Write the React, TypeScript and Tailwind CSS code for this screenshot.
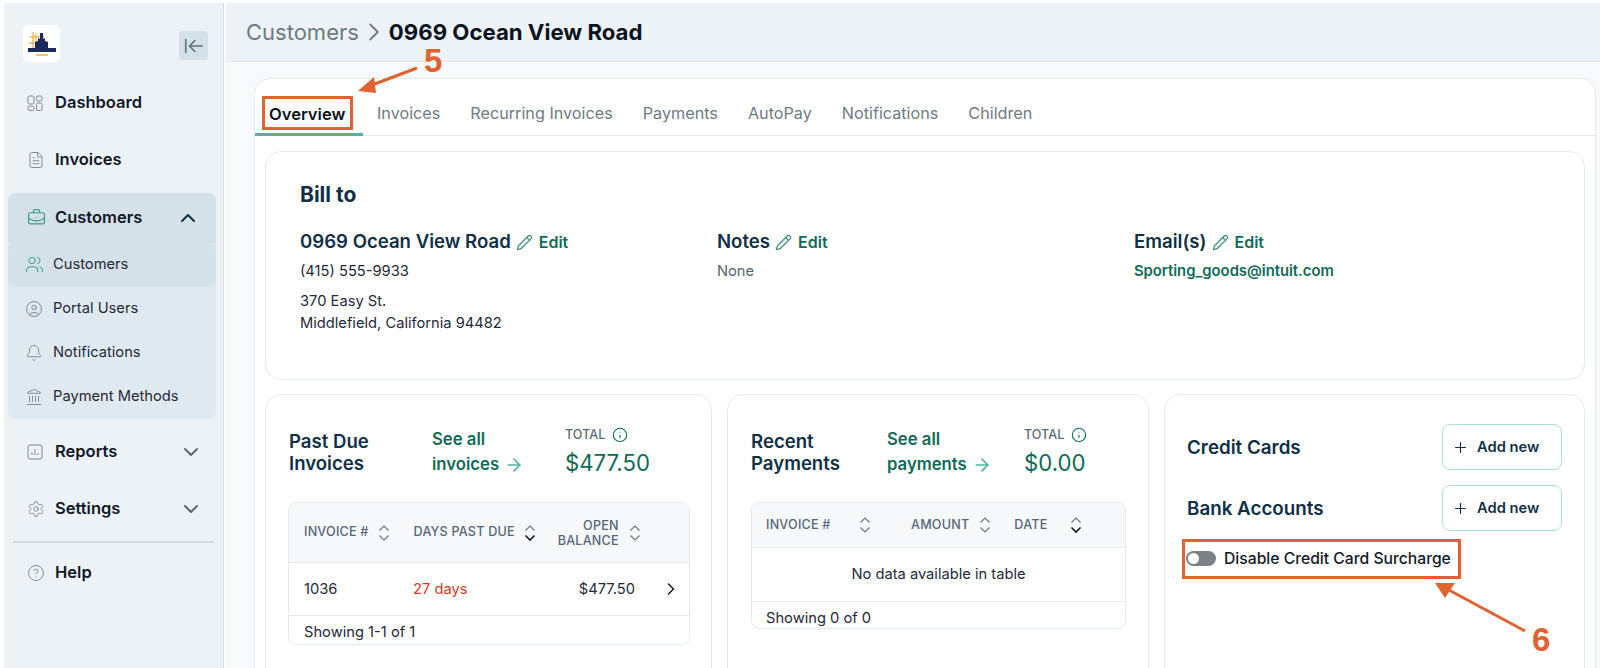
import type { ReactNode } from "react"
import {
  ArrowLeftToLine,
  ArrowRight,
  Bell,
  BriefcaseBusiness,
  ChevronDown,
  ChevronRight,
  ChevronUp,
  CircleHelp,
  CircleUser,
  FileText,
  Info,
  Landmark,
  Pencil,
  Plus,
  Settings,
  Users,
} from "lucide-react"

function Logo() {
  return (
    <div className="w-[37px] h-[37px] rounded-md bg-white ml-[19px] flex items-center justify-center">
      <svg width="32" height="28" viewBox="0 0 32 28">
        <path d="M7 2v17M4 7h14M3 13h10M10 4v12" stroke="#f3b35c" strokeWidth="1.4" fill="none" />
        <path d="M9 18v-6l3-1v-3l2 1V3h3v6l2-1v3l3 1v6z" fill="#1a2a5e" />
        <rect x="2" y="18" width="28" height="4" fill="#1a2a5e" />
        <rect x="10" y="24" width="12" height="2" fill="#f3c26e" />
      </svg>
    </div>
  )
}

function DashboardIcon() {
  return (
    <svg width="16" height="16" viewBox="0 0 16 16" fill="none" stroke="#7f878e" strokeWidth="1">
      <rect x="1" y="1" width="6" height="8" rx="1.5" />
      <rect x="9.5" y="1" width="5.5" height="5" rx="1.5" />
      <rect x="1" y="11" width="6" height="4.5" rx="1.5" />
      <rect x="9.5" y="8" width="5.5" height="7.5" rx="1.5" />
    </svg>
  )
}

function ReportIcon() {
  return (
    <svg width="16" height="16" viewBox="0 0 16 16" fill="none" stroke="#7f878e" strokeWidth="1">
      <rect x="1" y="1" width="14" height="14" rx="2" />
      <path d="M5 11V8M8 11V5M11 11V9" />
    </svg>
  )
}

function NavItem({ icon, label, chevron }: { icon: ReactNode; label: string; chevron?: boolean }) {
  return (
    <div className="h-[57px] flex items-center pl-[23px] pr-[20px]">
      <span className="w-[28px] flex">{icon}</span>
      <span className="text-[16.5px] font-semibold text-[#111827]">{label}</span>
      {chevron && <ChevronDown className="ml-auto w-[24px] h-[24px] text-[#5b6b75]" strokeWidth={2} />}
    </div>
  )
}

function SubItem({ icon, label, active }: { icon: ReactNode; label: string; active?: boolean }) {
  return (
    <div className={`h-[44px] flex items-center pl-[17px] pb-[1px] rounded-lg ${active ? "bg-[#d5e1e9]" : ""}`}>
      <span className="w-[28px] flex">{icon}</span>
      <span className="text-[14.7px] text-[#1f2937]">{label}</span>
    </div>
  )
}

function Sidebar() {
  const gray = "w-[18px] h-[18px] text-[#7f878e]"
  return (
    <aside className="w-[220px] shrink-0 bg-[#edf2f7] border-r border-[#d8dde2] flex flex-col">
      <div className="h-[71px] flex items-start justify-between pt-[22px] pr-[15px]">
        <Logo />
        <button className="w-[29px] h-[29px] mt-[6px] rounded bg-[#d5e1e9] flex items-center justify-center">
          <ArrowLeftToLine className="w-[22px] h-[22px] text-[#5f6f7a]" strokeWidth={1.75} />
        </button>
      </div>
      <NavItem icon={<DashboardIcon />} label="Dashboard" />
      <NavItem icon={<FileText className={gray} strokeWidth={1.25} />} label="Invoices" />
      <div className="mx-[4px] mt-[5px] w-[208px] rounded-lg bg-[#e1e9f0]">
        <div className="h-[50px] pb-[1px] rounded-t-lg bg-[#d5e1e9] flex items-center pl-[19px] pr-[16px]">
          <span className="w-[28px] flex">
            <BriefcaseBusiness className="w-[19px] h-[19px] text-[#3f9c86]" strokeWidth={1.5} />
          </span>
          <span className="text-[16.5px] font-semibold text-[#111827]">Customers</span>
          <ChevronUp className="ml-auto w-[24px] h-[24px] text-[#0f3047]" strokeWidth={2} />
        </div>
        <SubItem icon={<Users className="w-[19px] h-[19px] text-[#3f9c86]" strokeWidth={1.25} />} label="Customers" active />
        <SubItem icon={<CircleUser className={gray} strokeWidth={1.25} />} label="Portal Users" />
        <SubItem icon={<Bell className={gray} strokeWidth={1.25} />} label="Notifications" />
        <SubItem icon={<Landmark className={gray} strokeWidth={1.25} />} label="Payment Methods" />
      </div>
      <div className="mt-[4px]">
        <NavItem icon={<ReportIcon />} label="Reports" chevron />
        <NavItem icon={<Settings className={gray} strokeWidth={1.25} />} label="Settings" chevron />
      </div>
      <div className="mx-[9px] mt-[4px] mb-[1px] h-[2px] bg-[#d3d9de]" />
      <NavItem icon={<CircleHelp className={gray} strokeWidth={1.25} />} label="Help" />
    </aside>
  )
}

function BillColumn({ title, children }: { title: string; children: ReactNode }) {
  return (
    <div className="w-[417px] shrink-0">
      <div className="flex items-center h-[24px]">
        <span className="text-[18.6px] font-semibold text-[#0f3047]">{title}</span>
        <Pencil className="w-[17px] h-[17px] ml-[5px] text-[#3f8f78]" strokeWidth={1.75} />
        <span className="ml-[6px] text-[16px] font-semibold text-[#0f6b57]">Edit</span>
      </div>
      {children}
    </div>
  )
}

function Sort({ dark }: { dark?: boolean }) {
  return (
    <svg className="shrink-0" width="14" height="18" viewBox="0 0 14 18" fill="none" strokeWidth="1.2">
      <path d="M2.5 6.5L7 2l4.5 4.5" stroke="#6b7682" />
      <path d="M2.5 11.5L7 16l4.5-4.5" stroke={dark ? "#111827" : "#6b7682"} strokeWidth={dark ? 1.6 : 1.2} />
    </svg>
  )
}

function SummaryHead({ line1, line2, link1, link2, total, linkW, titleW }: { line1: string; line2: string; link1: string; link2: string; total: string; linkW: string; titleW: string }) {
  return (
    <div className="flex items-start pt-[31px] h-[107px]">
      <div className={`${titleW} pt-[4px] text-[18.6px] leading-[22px] font-semibold text-[#0f3047]`}>
        {line1}
        <br />
        {line2}
      </div>
      <div className={`${linkW} pt-[1px] text-[16.7px] leading-[25px] font-semibold text-[#0f6b57]`}>
        {link1}
        <br />
        <span className="inline-flex items-center gap-[5px]">
          {link2}
          <ArrowRight className="w-[20px] h-[20px] text-[#4fb5a0]" strokeWidth={2} />
        </span>
      </div>
      <div>
        <div className="flex items-center h-[18px] gap-[7px] text-[12.6px] font-medium text-[#5b6b75]">
          TOTAL
          <Info className="w-[16px] h-[16px] text-[#0f6b57]" strokeWidth={1.6} />
        </div>
        <div className="mt-[4px] text-[22.2px] leading-[30px] text-[#0f6b57]">{total}</div>
      </div>
    </div>
  )
}

function AddNew() {
  return (
    <button className="w-[120px] h-[46px] rounded-lg border border-[#aee0d8] bg-white flex items-center pl-[9px] text-[14.7px] font-semibold text-[#0f3047]">
      <Plus className="w-[17px] h-[17px]" strokeWidth={1.6} />
      <span className="ml-[8px]">Add new</span>
    </button>
  )
}

function App() {
  const th = "text-[12.6px] font-medium text-[#55657a] tracking-[0.2px]"
  return (
    <div className="relative w-[1600px] h-[668px] overflow-hidden bg-white pt-[3px] pl-[4px] font-['Inter',sans-serif]">
      <div className="flex h-[665px]">
        <Sidebar />
        <main className="flex-1 min-w-0 ml-[2px] flex flex-col bg-[#f8f9fb]">
          <header className="h-[59px] shrink-0 bg-[#edf2f7] border-b border-[#dfe4e8] flex items-center pl-[20px] text-[22px]">
            <span className="text-[#6f7a82]">Customers</span>
            <ChevronRight className="w-[30px] h-[30px] text-[#6f7a82]" strokeWidth={1.5} />
            <span className="text-[22.2px] font-bold text-[#0b1320]">0969 Ocean View Road</span>
          </header>
          <div className="pl-[28px] pr-[4px] pt-[16px]">
            <section className="h-[800px] rounded-t-[16px] bg-white border border-[#e6e9ee]">
              <nav className="h-[57px] border-b border-[#e6e9ee] flex items-end text-[16.2px] text-[#6f7a82]">
                <div className="w-[108px] h-[38px] pt-[4px] -mb-px border-b-[3px] border-[#4fb5a0] pl-[14px] text-[16.6px] font-semibold text-[#0b1320]">Overview</div>
                <div className="flex gap-[30px] h-[38px] pt-[4px] pl-[14px]">
                  <span>Invoices</span>
                  <span>Recurring Invoices</span>
                  <span>Payments</span>
                  <span>AutoPay</span>
                  <span>Notifications</span>
                  <span>Children</span>
                </div>
              </nav>
              <div className="pl-[10px] pr-[10px] pt-[15px]">
                <div className="h-[229px] rounded-[16px] border border-[#e6e9ee] pl-[34px] pt-[30px]">
                  <h2 className="text-[21px] leading-[26px] font-bold text-[#0f3047]">Bill to</h2>
                  <div className="flex mt-[22px]">
                    <BillColumn title="0969 Ocean View Road">
                      <p className="mt-[6px] text-[14.7px] leading-[22px] text-[#1f2937]">(415) 555-9933</p>
                      <p className="mt-[8px] text-[14.7px] leading-[22px] text-[#1f2937]">
                        370 Easy St.
                        <br />
                        Middlefield, California 94482
                      </p>
                    </BillColumn>
                    <BillColumn title="Notes">
                      <p className="mt-[6px] text-[14.7px] leading-[22px] text-[#5b6470]">None</p>
                    </BillColumn>
                    <BillColumn title="Email(s)">
                      <p className="mt-[6px] text-[14.8px] leading-[22px] font-semibold text-[#0f6b57]">Sporting_goods@intuit.com</p>
                    </BillColumn>
                  </div>
                </div>
                <div className="flex gap-[15px] mt-[14px]">
                  <div className="w-[447px] h-[400px] rounded-[16px] border border-[#e6e9ee] px-[23px]">
                    <SummaryHead line1="Past Due" line2="Invoices" link1="See all" link2="invoices" total="$477.50" titleW="w-[143px]" linkW="w-[133px]" />
                    <div className="w-[402px] -ml-[1px] h-[143px] overflow-hidden rounded-lg border border-[#e6e9ee]">
                      <div className="h-[60px] bg-[#f7f8f9] border-b border-[#e6e9ee] flex items-center pl-[15px]">
                        <span className={th}>INVOICE #</span>
                        <span className="ml-[8px]"><Sort /></span>
                        <span className={`${th} ml-[23px]`}>DAYS PAST DUE</span>
                        <span className="ml-[8px]"><Sort dark /></span>
                        <span className={`${th} ml-[21px] text-right leading-[15px]`}>OPEN<br />BALANCE</span>
                        <span className="ml-[9px]"><Sort /></span>
                      </div>
                      <div className="h-[53px] border-b border-[#e6e9ee] flex items-center pl-[15px] text-[14.7px] text-[#1f2937]">
                        <span className="w-[109px]">1036</span>
                        <span className="text-[#d9381e]">27 days</span>
                        <span className="ml-auto">$477.50</span>
                        <ChevronRight className="w-[20px] h-[20px] mr-[8px] ml-[26px] text-[#111827]" strokeWidth={1.75} />
                      </div>
                      <div className="pl-[15px] text-[14.7px] leading-[33px] text-[#1f2937]">Showing 1-1 of 1</div>
                    </div>
                  </div>
                  <div className="w-[422px] h-[400px] rounded-[16px] border border-[#e6e9ee] px-[23px]">
                    <SummaryHead line1="Recent" line2="Payments" link1="See all" link2="payments" total="$0.00" titleW="w-[136px]" linkW="w-[137px]" />
                    <div className="w-[375px] h-[127px] overflow-hidden rounded-lg border border-[#e6e9ee]">
                      <div className="h-[45px] bg-[#f7f8f9] border-b border-[#e6e9ee] flex items-center pl-[14px]">
                        <span className={`${th} w-[92px]`}>INVOICE #</span>
                        <Sort />
                        <span className={`${th} ml-[39px]`}>AMOUNT</span>
                        <span className="ml-[9px]"><Sort /></span>
                        <span className={`${th} ml-[22px] w-[55px]`}>DATE</span>
                        <Sort dark />
                      </div>
                      <div className="h-[54px] border-b border-[#e6e9ee] flex items-center justify-center text-[14.7px] text-[#1f2937]">No data available in table</div>
                      <div className="pl-[14px] text-[14.7px] leading-[32px] text-[#1f2937]">Showing 0 of 0</div>
                    </div>
                  </div>
                  <div className="w-[421px] h-[400px] rounded-[16px] border border-[#e6e9ee] pl-[22px] pr-[22px] pt-[29px]">
                    <div className="flex items-center justify-between h-[46px]">
                      <span className="pt-[2px] text-[18.8px] font-semibold text-[#0f3047]">Credit Cards</span>
                      <AddNew />
                    </div>
                    <div className="flex items-center justify-between h-[46px] mt-[15px]">
                      <span className="pt-[2px] text-[18.8px] font-semibold text-[#0f3047]">Bank Accounts</span>
                      <AddNew />
                    </div>
                    <div className="flex items-center mt-[19px] -ml-[1px] h-[16px]">
                      <span className="w-[30px] h-[15px] rounded-full bg-[#7a8286] flex items-center pl-[2px]">
                        <span className="w-[11px] h-[11px] rounded-full bg-white" />
                      </span>
                      <span className="ml-[8px] pt-[1px] text-[15.7px] font-medium text-[#111827]">Disable Credit Card Surcharge</span>
                    </div>
                  </div>
                </div>
              </div>
            </section>
          </div>
        </main>
      </div>

      {/* annotations */}
      <div className="absolute left-[262px] top-[96px] w-[91px] h-[34px] border-[3px] border-[#e0622f]" />
      <div className="absolute left-[1182px] top-[539px] w-[279px] h-[40px] border-[3px] border-[#e0622f]" />
      <span className="absolute left-[424px] top-[42px] text-[33px] leading-[38px] font-bold text-[#e0622f] font-['Liberation_Sans',sans-serif]">5</span>
      <span className="absolute left-[1532px] top-[621px] text-[33px] leading-[38px] font-bold text-[#e0622f] font-['Liberation_Sans',sans-serif]">6</span>
      <svg className="absolute left-0 top-0 pointer-events-none" width="1600" height="668" fill="none">
        <path d="M417 68L372 85" stroke="#e0622f" strokeWidth="3" />
        <path d="M358 91L374 77L376 93Z" fill="#e0622f" />
        <path d="M1525 631L1447 589" stroke="#e0622f" strokeWidth="3" />
        <path d="M1435 583L1455 583L1445 598Z" fill="#e0622f" />
      </svg>
    </div>
  )
}

export default App
